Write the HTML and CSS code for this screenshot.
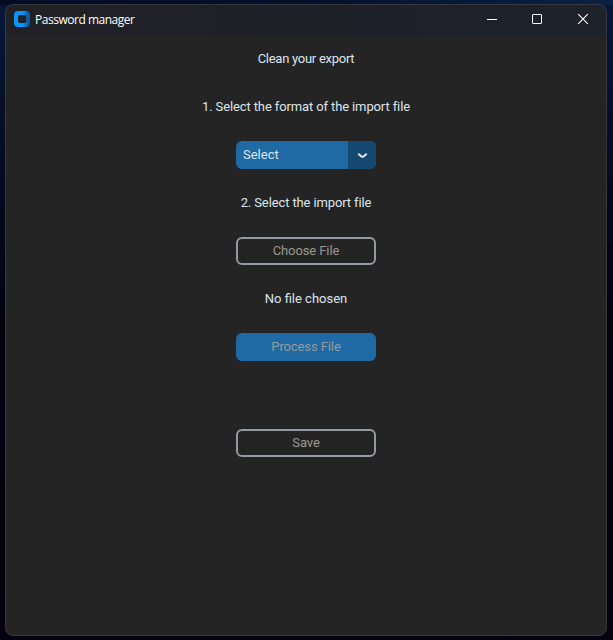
FILE: index.html
```
<!DOCTYPE html>
<html lang="en">
<head>
<meta charset="utf-8">
<title>Password manager</title>
<link rel="stylesheet" href="styles.css">
</head>
<body>
<div class="window">
  <header class="titlebar">
    <svg class="logo" width="16" height="16" viewBox="0 0 16 16">
      <defs><linearGradient id="g" x1="0" x2="1"><stop offset=".6" stop-color="#0795f8"/><stop offset=".8" stop-color="#0868b8"/><stop offset="1" stop-color="#0a579c"/></linearGradient></defs>
      <rect width="16" height="16" rx="4" fill="url(#g)"/>
      <rect x="4" y="4" width="8.3" height="8" rx="2" fill="#1d2227"/>
    </svg>
    <h1 class="title">Password manager</h1>
    <div class="controls">
      <svg width="46" height="30" viewBox="0 0 46 30"><path d="M18 14.5h10" stroke="#fff"/></svg>
      <svg width="45" height="30" viewBox="0 0 45 30"><rect x="17.5" y="9.5" width="9" height="9" rx=".5" fill="none" stroke="#fff"/></svg>
      <svg width="46" height="30" viewBox="0 0 46 30"><path d="M18.2 9.2l9.6 9.6M27.8 9.2l-9.6 9.6" stroke="#fff" stroke-width="1.1"/></svg>
    </div>
  </header>
  <main class="content">
    <p class="label heading">Clean your export</p>
    <p class="label step">1. Select the format of the import file</p>
    <div class="select">
      <span class="value">Select</span>
      <span class="arrow"><svg width="28" height="28" viewBox="0 0 28 28"><path d="M10.8 13.2L13.6 15.6Q14.5 16.1 15.4 15.6L18.2 13.2" fill="none" stroke="#dce4ee" stroke-width="2" stroke-linecap="round"/></svg></span>
    </div>
    <p class="label step">2. Select the import file</p>
    <button class="button outline" disabled>Choose File</button>
    <p class="label">No file chosen</p>
    <button class="button filled" disabled>Process File</button>
    <p class="label"></p>
    <button class="button outline" disabled>Save</button>
  </main>
</div>
</body>
</html>
```
FILE: styles.css
```
* { box-sizing: border-box; }
body {
  margin: 0;
  height: 640px;
  padding: 4px 6px 4px 5px;
  overflow: hidden;
  background: linear-gradient(90deg, #020a24 0%, #04102a 50%, #0a2145 100%) 0 0 / 100% 5px no-repeat,
    linear-gradient(180deg, #06183a 0%, #070d28 20%, #03020f 50%, #050110 100%);
  font-family: Roboto, sans-serif;
  font-size: 13px;
}
.window {
  height: 632px;
  border: 1px solid #38393d;
  border-radius: 8px;
  background: #242424;
  overflow: hidden;
}
.titlebar {
  display: flex;
  height: 30px;
  padding-left: 8px;
  background: linear-gradient(90deg, #202124, #1d2028 60%, #1e222b);
}
.logo { margin-top: 6px; }
.title {
  margin: 0 0 0 5px;
  font: 400 12px/30px "Open Sans", sans-serif;
  letter-spacing: -0.48px;
  color: #fff;
}
.controls { display: flex; margin-left: auto; }
.content {
  display: flex;
  flex-direction: column;
  align-items: center;
  gap: 20px;
  padding-top: 10px;
}
.label {
  height: 28px;
  margin: 0;
  line-height: 27px;
  color: #dce4ee;
}
.heading { letter-spacing: -0.27px; }
.step { letter-spacing: -0.12px; }
.select {
  display: flex;
  width: 140px;
  height: 28px;
  border-radius: 6px;
  overflow: hidden;
  background: #1f6aa5;
  color: #dce4ee;
  line-height: 27px;
}
.value { flex: 1; padding-left: 7px; }
.arrow { width: 28px; background: #144870; }
.arrow svg { display: block; }
.button {
  width: 140px;
  height: 28px;
  padding: 0 0 1px;
  border: 0;
  border-radius: 6px;
  font: inherit;
  letter-spacing: -0.1px;
}
.outline {
  border: 2px solid #949a9f;
  background: transparent;
  color: #99998f;
}
.filled { background: #1f6aa5; color: #999999; }
```
